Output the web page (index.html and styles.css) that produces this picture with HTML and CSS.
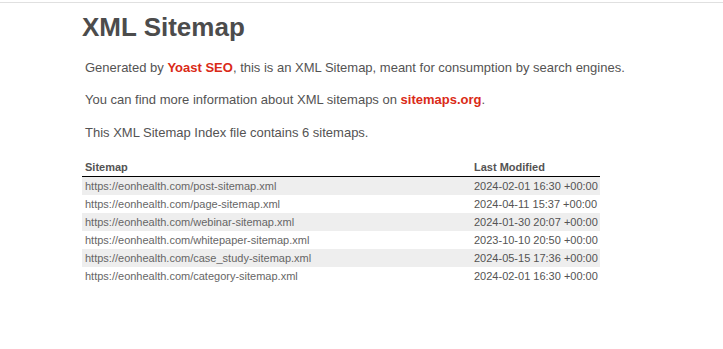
FILE: index.html
```html
<!DOCTYPE html>
<html>
<head>
<meta charset="utf-8">
<title>XML Sitemap</title>
<link rel="stylesheet" href="styles.css">
</head>
<body>
<div class="topline"></div>
<div id="content">
  <h1 class="title">XML Sitemap</h1>
  <p class="expl">Generated by <a href="#">Yoast SEO</a>, this is an XML Sitemap, meant for consumption by search engines.</p>
  <p class="expl">You can find more information about XML sitemaps on <a href="#">sitemaps.org</a>.</p>
  <p class="expl expl-count">This XML Sitemap Index file contains 6 sitemaps.</p>
  <table class="sitemap">
    <colgroup><col class="c1"><col class="c2"></colgroup>
    <thead>
      <tr><th>Sitemap</th><th>Last Modified</th></tr>
    </thead>
    <tbody>
      <tr><td><a href="#">https://eonhealth.com/post-sitemap.xml</a></td><td>2024-02-01 16:30 +00:00</td></tr>
      <tr><td><a href="#">https://eonhealth.com/page-sitemap.xml</a></td><td>2024-04-11 15:37 +00:00</td></tr>
      <tr><td><a href="#">https://eonhealth.com/webinar-sitemap.xml</a></td><td>2024-01-30 20:07 +00:00</td></tr>
      <tr><td><a href="#">https://eonhealth.com/whitepaper-sitemap.xml</a></td><td>2023-10-10 20:50 +00:00</td></tr>
      <tr><td><a href="#">https://eonhealth.com/case_study-sitemap.xml</a></td><td>2024-05-15 17:36 +00:00</td></tr>
      <tr><td><a href="#">https://eonhealth.com/category-sitemap.xml</a></td><td>2024-02-01 16:30 +00:00</td></tr>
    </tbody>
  </table>
</div>
</body>
</html>
```

FILE: styles.css
```css
html, body {
  margin: 0;
  padding: 0;
  background: #fff;
}
body {
  font-family: "Liberation Sans", Arial, Helvetica, sans-serif;
  font-size: 13px;
  color: #545353;
}
.topline {
  margin-top: 2px;
  height: 1px;
  background: #e0e0e0;
}
#content {
  margin-left: 82px;
  width: 560px;
}
.title {
  font-size: 26px;
  font-weight: bold;
  color: #4c4c4c;
  line-height: 32px;
  margin: 8px 0 0 0;
}
.expl {
  margin: 15px 3px 0;
  line-height: 16.5px;
  white-space: nowrap;
}
.expl:first-of-type {
  margin-top: 17px;
}
.expl.expl-count {
  margin-top: 17px;
}
.expl a {
  color: #da2a17;
  font-weight: bold;
  text-decoration: none;
}
.sitemap {
  margin-top: 16px;
  width: 518px;
  border: none;
  border-collapse: collapse;
  table-layout: fixed;
}
.sitemap .c1 { width: 392px; }
.sitemap .c2 { width: 126px; }
.sitemap th {
  text-align: left;
  font-size: 11px;
  font-weight: bold;
  color: #545353;
  padding: 0 3px;
  height: 18px;
  border-bottom: 1px solid #000;
}
.sitemap th + th, .sitemap td + td {
  padding-left: 0;
}
.sitemap td {
  font-size: 11px;
  height: 18px;
  padding: 0 3px;
  color: #545353;
  white-space: nowrap;
}
.sitemap tbody tr:nth-child(odd) td {
  background: #eee;
}
.sitemap td a {
  color: #666;
  text-decoration: none;
}
```
